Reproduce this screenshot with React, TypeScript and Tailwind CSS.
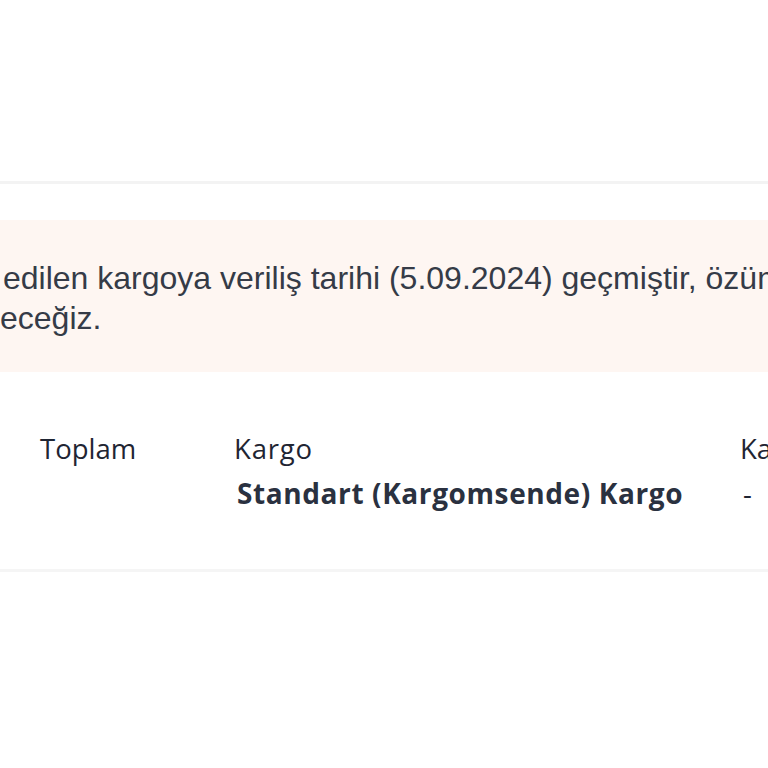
export default function App() {
  return (
    <div className="w-[768px] h-[768px] bg-white overflow-hidden relative">
      <div className="h-[181px]" />
      <div className="h-[3px] bg-[#f3f3f3]" />
      <div className="h-[36px]" />
      <div className="h-[152px] bg-[#fef6f2] flex flex-col justify-center pl-[3px] text-[#353b47] text-[32px] leading-[40px] whitespace-nowrap overflow-hidden" style={{ fontFamily: '"Liberation Sans", Arial, sans-serif' }}>
        <div className="pt-[4px]">edilen kargoya veriliş tarihi (5.09.2024) geçmiştir, özüm</div>
        <div className="-ml-[3px]">eceğiz.</div>
      </div>
      <div className="h-[54px]" />
      <div className="flex text-[#1f2533] text-[27.5px] leading-[45px] whitespace-nowrap" style={{ fontFamily: '"Open Sans", "Segoe UI", sans-serif' }}>
        <div className="w-[40px] shrink-0" />
        <div className="w-[194px] shrink-0">Toplam</div>
        <div className="w-[506px] shrink-0">
          <div className="tracking-[0.8px]">Kargo</div>
          <div className="font-bold pl-[3px] text-[#2a3140] text-[28px] tracking-[0.6px]">Standart (Kargomsende) Kargo</div>
        </div>
        <div className="shrink-0">
          <div>Ka</div>
          <div className="pl-[3px]">-</div>
        </div>
      </div>
      <div className="h-[53px]" />
      <div className="h-[3px] bg-[#f5f5f5]" />
    </div>
  );
}
